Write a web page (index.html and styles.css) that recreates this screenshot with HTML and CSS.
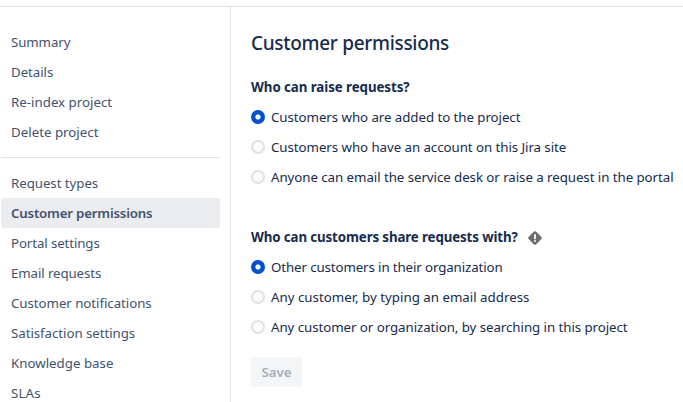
FILE: index.html
```html
<!DOCTYPE html>
<html lang="en">
<head>
<meta charset="utf-8">
<title>Customer permissions</title>
<link rel="stylesheet" href="styles.css">
</head>
<body>
<div class="layout">
  <nav class="sidebar">
    <ul class="nav-group">
      <li><a class="nav-item tighter">Summary</a></li>
      <li><a class="nav-item tight">Details</a></li>
      <li><a class="nav-item">Re-index project</a></li>
      <li><a class="nav-item">Delete project</a></li>
    </ul>
    <ul class="nav-group divided">
      <li><a class="nav-item tight">Request types</a></li>
      <li><a class="nav-item selected">Customer permissions</a></li>
      <li><a class="nav-item tighter">Portal settings</a></li>
      <li><a class="nav-item tighter">Email requests</a></li>
      <li><a class="nav-item tight">Customer notifications</a></li>
      <li><a class="nav-item tight">Satisfaction settings</a></li>
      <li><a class="nav-item">Knowledge base</a></li>
      <li><a class="nav-item loose">SLAs</a></li>
    </ul>
  </nav>
  <main class="content">
    <h1>Customer permissions</h1>
    <section class="question">
      <h2 class="tight">Who can raise requests?</h2>
      <label class="option tight"><i class="radio checked"></i>Customers who are added to the project</label>
      <label class="option tight"><i class="radio"></i>Customers who have an account on this Jira site</label>
      <label class="option tight"><i class="radio"></i>Anyone can email the service desk or raise a request in the portal</label>
    </section>
    <section class="question">
      <h2 class="tighter">Who can customers share requests with?
        <svg class="warning" viewBox="0 0 16 16" width="16" height="16"><path d="M7 1.6a1.5 1.5 0 0 1 2 0L14.4 7a1.4 1.4 0 0 1 0 2L9 14.4a1.5 1.5 0 0 1-2 0L1.6 9a1.4 1.4 0 0 1 0-2z" fill="#6b6b6b"/><path d="M8 5v3.4" stroke="#fff" stroke-width="1.8" stroke-linecap="round"/><circle cx="8" cy="11" r="1" fill="#fff"/></svg></h2>
      <label class="option tighter"><i class="radio checked"></i>Other customers in their organization</label>
      <label class="option"><i class="radio"></i>Any customer, by typing an email address</label>
      <label class="option tight"><i class="radio"></i>Any customer or organization, by searching in this project</label>
    </section>
    <button class="save" disabled>Save</button>
  </main>
</div>
</body>
</html>
```
FILE: styles.css
```css
* { box-sizing: border-box; }
body { margin: 0; padding-top: 6px; height: 402px; overflow: hidden; background: #fff; color: #172b4d; font: 13.3px/20px "Noto Sans", sans-serif; }
.layout { display: flex; height: 396px; border-top: 1px solid #dfe1e6; }
.sidebar { flex: none; width: 231px; padding: 20px 10px 0 1px; border-right: 1px solid #dfe1e6; overflow: hidden; color: #42526e; }
.nav-group { margin: 0; padding: 0; list-style: none; }
.divided { margin-top: 10px; padding-top: 10px; border-top: 1px solid #dfe1e6; }
.nav-item { display: flex; align-items: center; height: 30px; padding: 0 10px; border-radius: 3px; white-space: nowrap; }
.selected { background: #ebecf0; font-weight: 600; letter-spacing: -0.2px; }
.tight { letter-spacing: -0.06px; }
.tighter { letter-spacing: -0.115px; }
.loose { letter-spacing: 0.15px; }
.content { flex: 1; padding: 22px 0 0 20px; white-space: nowrap; }
h1 { margin: 0; font-size: 19px; line-height: 28px; font-weight: 500; letter-spacing: -0.31px; }
.question { margin-top: 15px; }
.question + .question { margin-top: 30px; }
h2 { display: flex; align-items: center; gap: 9px; height: 30px; margin: 0; font-size: 13.3px; font-weight: 700; }
.warning { position: relative; top: 1px; }
.option { display: flex; align-items: center; height: 30px; gap: 6px; }
.radio { width: 14px; height: 14px; border: 2px solid #dfe1e6; border-radius: 50%; background: #fafbfc; }
.checked { border: 0; background: radial-gradient(circle, #fff 2.2px, #0052cc 3px); }
.save { display: block; width: 51px; height: 30px; margin: 15px 0 0; padding: 0; border: 0; border-radius: 3px; background: #f4f5f7; color: #a5adba; font: 600 13.3px/30px "Noto Sans", sans-serif; }
```
